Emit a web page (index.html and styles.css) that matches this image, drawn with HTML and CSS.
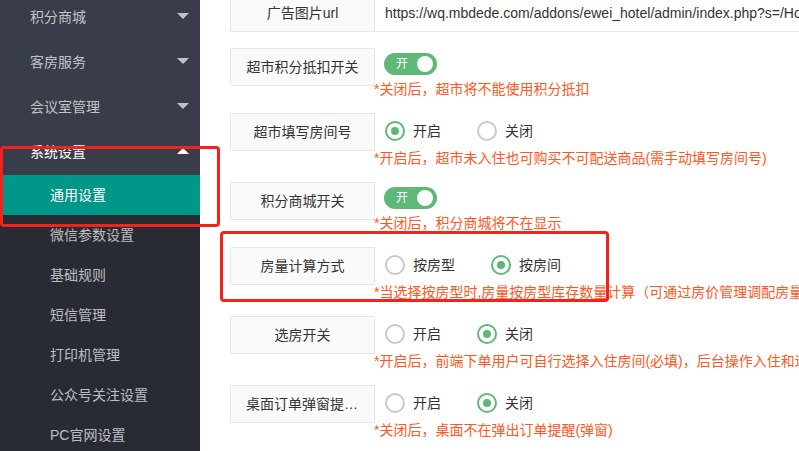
FILE: index.html
```html
<!DOCTYPE html>
<html lang="zh-CN">

<head>
    <meta charset="UTF-8">
    <meta name="viewport" content="width=device-width, initial-scale=1.0">
    <title>通用设置</title>
    <link rel="stylesheet" href="styles.css">
</head>

<body>
    <div class="layout">
        <aside class="side">
            <ul class="nav">
                <li class="nav-item">
                    <a class="nav-title">积分商城<span class="arrow"></span></a>
                </li>
                <li class="nav-item">
                    <a class="nav-title">客房服务<span class="arrow"></span></a>
                </li>
                <li class="nav-item">
                    <a class="nav-title">会议室管理<span class="arrow"></span></a>
                </li>
                <li class="nav-item open">
                    <a class="nav-title">系统设置<span class="arrow up"></span></a>
                    <ul class="sub">
                        <li class="active">通用设置</li>
                        <li>微信参数设置</li>
                        <li>基础规则</li>
                        <li>短信管理</li>
                        <li>打印机管理</li>
                        <li>公众号关注设置</li>
                        <li>PC官网设置</li>
                    </ul>
                </li>
            </ul>
        </aside>

        <main class="main">
            <form class="form" action="">
                <div class="item item-first">
                    <label class="label">广告图片url</label>
                    <input class="input" type="text" value="https://wq.mbdede.com/addons/ewei_hotel/admin/index.php?s=/Hotel/Setting/index">
                </div>

                <div class="item">
                    <label class="label">超市积分抵扣开关</label>
                    <div class="block">
                        <div class="ctl ctl-switch">
                            <span class="switch">开<i></i></span>
                        </div>
                        <p class="tip">*关闭后，超市将不能使用积分抵扣</p>
                    </div>
                </div>

                <div class="item">
                    <label class="label">超市填写房间号</label>
                    <div class="block">
                        <div class="ctl">
                            <span class="radio on"><i></i>开启</span>
                            <span class="radio"><i></i>关闭</span>
                        </div>
                        <p class="tip">*开启后，超市未入住也可购买不可配送商品(需手动填写房间号)</p>
                    </div>
                </div>

                <div class="item">
                    <label class="label">积分商城开关</label>
                    <div class="block">
                        <div class="ctl ctl-switch">
                            <span class="switch">开<i></i></span>
                        </div>
                        <p class="tip">*关闭后，积分商城将不在显示</p>
                    </div>
                </div>

                <div class="item">
                    <label class="label">房量计算方式</label>
                    <div class="block">
                        <div class="ctl">
                            <span class="radio"><i></i>按房型</span>
                            <span class="radio on"><i></i>按房间</span>
                        </div>
                        <p class="tip">*当选择按房型时,房量按房型库存数量计算（可通过房价管理调配房量）</p>
                    </div>
                </div>

                <div class="item">
                    <label class="label">选房开关</label>
                    <div class="block">
                        <div class="ctl">
                            <span class="radio"><i></i>开启</span>
                            <span class="radio on"><i></i>关闭</span>
                        </div>
                        <p class="tip">*开启后，前端下单用户可自行选择入住房间(必填)，后台操作入住和退房</p>
                    </div>
                </div>

                <div class="item">
                    <label class="label">桌面订单弹窗提醒开关</label>
                    <div class="block">
                        <div class="ctl">
                            <span class="radio"><i></i>开启</span>
                            <span class="radio on"><i></i>关闭</span>
                        </div>
                        <p class="tip">*关闭后，桌面不在弹出订单提醒(弹窗)</p>
                    </div>
                </div>
            </form>
        </main>

        <!-- annotation frames -->
        <div class="mark mark-nav"></div>
        <div class="mark mark-row"></div>
    </div>
</body>

</html>
```

FILE: styles.css
```css
body {
    margin: 0;
    font: 14px "Liberation Sans", "Noto Sans CJK SC", sans-serif;
    color: #333;
    background: #fff;
}

.layout {
    position: relative;
    display: flex;
    height: 451px;
    overflow: hidden;
}

/* sidebar */
.side {
    width: 200px;
    flex-shrink: 0;
    background: #393d49;
}

.nav,
.sub {
    list-style: none;
    margin: 0;
    padding: 0;
}

.nav {
    margin-top: -5px;
}

.nav-title {
    display: flex;
    align-items: center;
    justify-content: space-between;
    box-sizing: border-box;
    height: 45px;
    padding: 0 11px 4px 30px;
    color: rgba(255, 255, 255, .7);
}

.open .nav-title {
    color: #fff;
}

.arrow {
    width: 0;
    height: 0;
    border-left: 6px solid transparent;
    border-right: 6px solid transparent;
    border-top: 6px solid #c2c2c2;
}

.arrow.up {
    border-top: 0;
    border-bottom: 6px solid #fff;
}

.sub {
    background: #282b33;
}

.sub li {
    height: 40px;
    line-height: 40px;
    padding-left: 50px;
    color: rgba(255, 255, 255, .7);
}

.sub .active {
    background: #009688;
    color: #fff;
}

/* content */
.main {
    flex: 1;
    min-width: 0;
    padding-left: 30px;
    overflow: hidden;
}

.item {
    display: flex;
    margin-bottom: 15px;
}

.item-first {
    margin-top: -6px;
    margin-bottom: 16px;
}

.label {
    flex-shrink: 0;
    width: 145px;
    height: 38px;
    box-sizing: border-box;
    padding: 0 15px;
    border: 1px solid #e6e6e6;
    border-radius: 2px 0 0 2px;
    background: #fafafa;
    line-height: 36px;
    text-align: center;
    white-space: nowrap;
    overflow: hidden;
    text-overflow: ellipsis;
}

.input {
    flex-shrink: 0;
    width: 600px;
    height: 38px;
    box-sizing: border-box;
    padding: 0 10px;
    border: 1px solid #e6e6e6;
    border-left: 0;
    font: inherit;
    color: #333;
    outline: none;
}

.block {
    display: flex;
    flex-direction: column;
}

.ctl {
    display: flex;
    align-items: center;
    height: 36px;
    padding-left: 10px;
}

.ctl-switch {
    height: 32px;
    padding-left: 9px;
}

.tip {
    margin: 0 0 0 -1px;
    line-height: 18px;
    color: #ff5722;
    white-space: nowrap;
}

.switch {
    display: flex;
    align-items: center;
    justify-content: space-between;
    width: 53px;
    height: 22px;
    box-sizing: border-box;
    padding: 0 4px 0 12px;
    border-radius: 11px;
    background: #5fb878;
    color: #fff;
    font-size: 12px;
    line-height: 22px;
}

.switch i {
    width: 16px;
    height: 16px;
    border-radius: 50%;
    background: #fff;
}

.radio {
    display: flex;
    align-items: center;
    margin-right: 36px;
    line-height: 20px;
}

.radio i {
    display: flex;
    align-items: center;
    justify-content: center;
    width: 20px;
    height: 20px;
    box-sizing: border-box;
    margin-right: 8px;
    border: 2px solid #c9c9c9;
    border-radius: 50%;
}

.radio.on i {
    border-color: #5fb878;
}

.radio.on i::after {
    content: "";
    width: 8px;
    height: 8px;
    border-radius: 50%;
    background: #5fb878;
}

/* red annotation frames */
.mark {
    position: absolute;
    box-sizing: border-box;
    border: 3px solid #f5221b;
    border-radius: 4px;
}

.mark-nav {
    left: 0;
    top: 146px;
    width: 220px;
    height: 81px;
}

.mark-row {
    left: 220px;
    top: 231px;
    width: 389px;
    height: 71px;
}
```
